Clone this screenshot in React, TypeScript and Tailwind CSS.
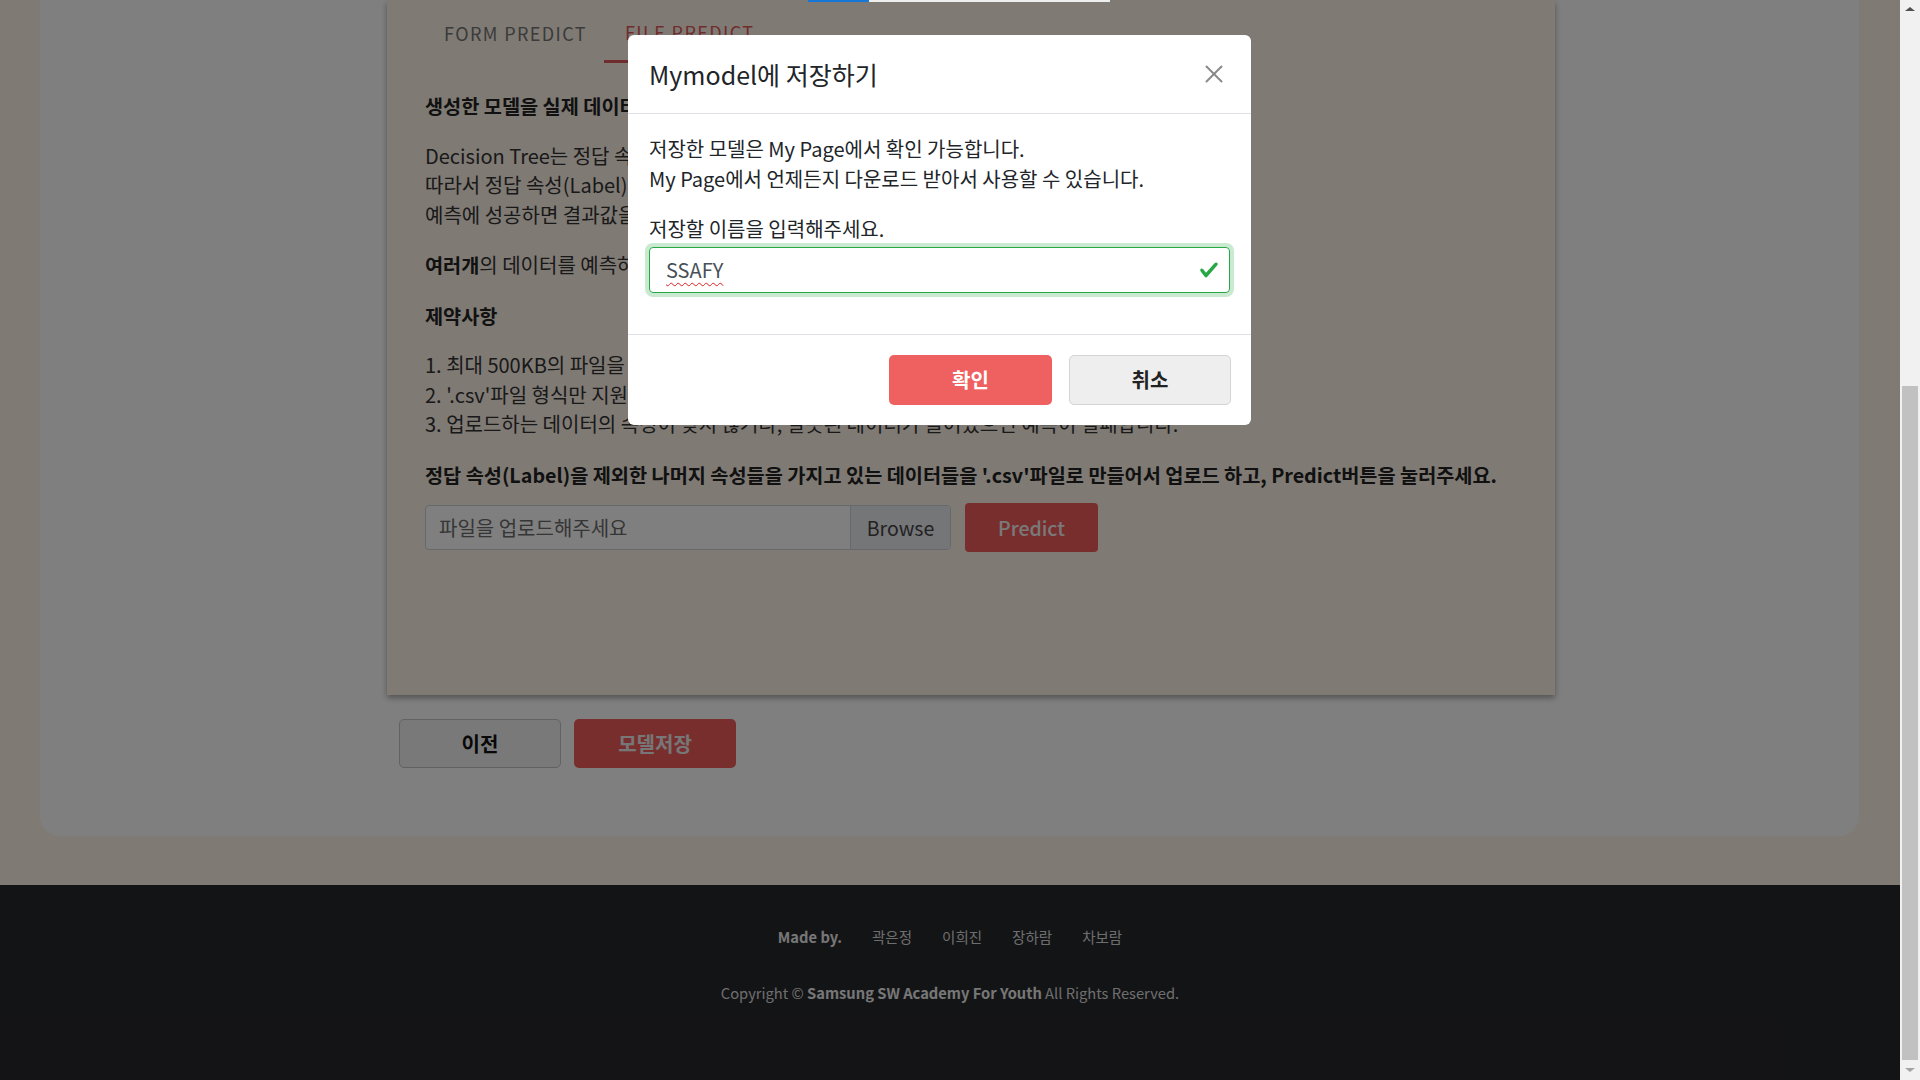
import { X } from 'lucide-react';

const members = ['곽은정', '이희진', '장하람', '차보람'];

function CheckIcon() {
  return (
    <svg viewBox="0 0 8 8" className="w-[20px] h-[20px]">
      <path
        fill="#28a745"
        d="M2.3 6.73L.6 4.53c-.4-1.04.46-1.4 1.1-.8l1.1 1.4 3.4-3.8c.6-.63 1.6-.27 1.2.7l-4 4.6c-.43.5-.8.4-1.1.1z"
      />
    </svg>
  );
}

function SaveModal() {
  return (
    <div className="absolute left-[628px] top-[35px] w-[623px] bg-white rounded-[6px] flex flex-col text-[#212529]">
      <div className="h-[79px] border-b border-[#dee2e6] flex items-center justify-between pl-[21px] pr-[22px]">
        <h5 className="text-[25px] leading-none">Mymodel에 저장하기</h5>
        <X className="w-[30px] h-[30px] text-[#8a8a8a]" strokeWidth={1.6} />
      </div>
      <div className="pt-[20px] pb-[41px] px-[21px] text-[20px] leading-[29.5px]">
        <p>
          저장한 모델은 My Page에서 확인 가능합니다.
          <br />
          My Page에서 언제든지 다운로드 받아서 사용할 수 있습니다.
        </p>
        <p className="mt-[21px]">저장할 이름을 입력해주세요.</p>
        <div className="mt-[3px] h-[46px] border border-[#28a745] rounded-[4px] shadow-[0_0_0_4px_rgba(40,167,69,0.25)] flex items-center justify-between pl-[16px] pr-[10px]">
          <span className="text-[20px] text-[#495057] underline decoration-wavy decoration-[#e02020] decoration-1 underline-offset-[4px]">
            SSAFY
          </span>
          <CheckIcon />
        </div>
      </div>
      <div className="border-t border-[#dee2e6] flex justify-end gap-[17px] pt-[20px] pb-[20px] pr-[20px]">
        <button className="w-[163px] h-[50px] rounded-[5px] bg-[#ef6060] text-white font-bold text-[20px]">
          확인
        </button>
        <button className="w-[162px] h-[50px] rounded-[5px] bg-[#eeeeee] border border-[#d4d4d4] text-[#222] font-bold text-[20px]">
          취소
        </button>
      </div>
    </div>
  );
}

function PredictCard() {
  return (
    <div className="w-[1168px] h-[695px] bg-[#fef4e8] shadow-[0_3px_6px_rgba(0,0,0,0.35)] flex flex-col">
      <div className="h-[63px] flex items-end pl-[36px] text-[18px] tracking-[1.4px]">
        <div className="h-full flex items-center pl-[21px] pr-[17px] text-[#767676] pt-[4px]">FORM PREDICT</div>
        <div className="h-full flex items-center px-[21px] text-[#e05a5a] pt-[4px] border-b-[3px] border-[#e05a5a]">
          FILE PREDICT
        </div>
      </div>
      <div className="pt-[28px] px-[38px] text-[20px] leading-[29.5px] text-[#333]">
        <p className="font-bold text-[#222] text-[19.7px]">생성한 모델을 실제 데이터에 적용해보세요.</p>
        <p className="mt-[20px]">
          Decision Tree는 정답 속성을 예측하는 모델입니다.
          <br />
          따라서 정답 속성(Label)을 제외한 나머지 값들이 필요합니다.
          <br />
          예측에 성공하면 결과값을 확인할 수 있습니다.
        </p>
        <p className="mt-[21px]">
          <b className="text-[#222] text-[19.7px]">여러개</b>의 데이터를 예측하려면 파일을 올려주세요.
        </p>
        <p className="mt-[21px] font-bold text-[#222] text-[19.7px]">제약사항</p>
        <p className="mt-[20px]">
          1. 최대 500KB의 파일을 업로드할 수 있습니다.
          <br />
          2. '.csv'파일 형식만 지원합니다.
          <br />
          3. 업로드하는 데이터의 속성이 맞지 않거나, 잘못된 데이터가 들어있으면 예측이 실패합니다.
        </p>
        <p className="mt-[21px] font-bold text-[#222] text-[19.7px]">
          정답 속성(Label)을 제외한 나머지 속성들을 가지고 있는 데이터들을 '.csv'파일로 만들어서 업로드 하고, Predict버튼을 눌러주세요.
        </p>
        <div className="mt-[14px] flex items-center gap-[14px]">
          <div className="w-[526px] h-[45px] flex border border-[#ced4da] rounded-[4px] bg-white overflow-hidden">
            <div className="flex-1 flex items-center pl-[13px] text-[#6c6c6c]">파일을 업로드해주세요</div>
            <div className="w-[100px] flex items-center justify-center bg-[#eaecf1] border-l border-[#ced4da] text-[#444] text-[19.5px]">
              Browse
            </div>
          </div>
          <button className="w-[133px] h-[49px] rounded-[4px] bg-[#f25c5c] text-[#f2f2f2] text-[19.5px] font-medium">
            Predict
          </button>
        </div>
      </div>
    </div>
  );
}

function Footer() {
  return (
    <footer className="h-[195px] bg-[#27282c] flex flex-col items-center text-white text-[14.7px] leading-[22px] pt-[41px]">
      <div className="flex items-center gap-[30px]">
        <span className="font-bold text-[#eee]">Made by.</span>
        {members.map((m) => (
          <span key={m} className="text-[#ddd] text-[14.5px]">
            {m}
          </span>
        ))}
      </div>
      <p className="mt-[34px] text-[#ddd]">
        Copyright © <b className="text-[#eee]">Samsung SW Academy For Youth</b> All Rights Reserved.
      </p>
    </footer>
  );
}

function Scrollbar() {
  return (
    <div className="w-[20px] h-full bg-[#f1f1f1] flex flex-col">
      <div className="h-[17px] flex items-center justify-center">
        <div className="w-0 h-0 border-l-[5px] border-r-[5px] border-b-[4px] border-l-transparent border-r-transparent border-b-[#505050]" />
      </div>
      <div className="flex-1 px-[2px]">
        <div className="mt-[369px] h-[674px] bg-[#c1c1c1]" />
      </div>
      <div className="h-[20px] flex items-center justify-center">
        <div className="w-0 h-0 border-l-[5px] border-r-[5px] border-t-[4px] border-l-transparent border-r-transparent border-t-[#a3a3a3]" />
      </div>
    </div>
  );
}

export default function App() {
  return (
    <div className="w-[1920px] h-[1080px] flex overflow-hidden font-['Noto_Sans_CJK_KR','Noto_Sans',sans-serif]">
      <div className="relative w-[1900px] h-full bg-[#fef4e8] flex flex-col">
        <div className="pl-[40px]">
          <div className="w-[1819px] bg-white rounded-b-[20px] pl-[347px] pb-[68px]">
            <PredictCard />
            <div className="mt-[24px] pl-[12px] flex gap-[13px]">
              <button className="w-[162px] h-[49px] rounded-[5px] bg-[#f2f2f2] border border-[#c4c4c4] text-[#111] font-bold text-[20px]">
                이전
              </button>
              <button className="w-[162px] h-[49px] rounded-[5px] bg-[#f25c5c] text-[#eee] font-bold text-[20px]">
                모델저장
              </button>
            </div>
          </div>
        </div>
        <div className="flex-1" />
        <Footer />
        <div className="absolute inset-0 bg-black/50" />
        <div className="absolute top-0 left-[808px] w-[302px] h-[2px] flex bg-[#eeeeee]">
          <div className="w-[61px] h-full bg-[#1677d8]" />
        </div>
        <SaveModal />
      </div>
      <Scrollbar />
    </div>
  );
}
